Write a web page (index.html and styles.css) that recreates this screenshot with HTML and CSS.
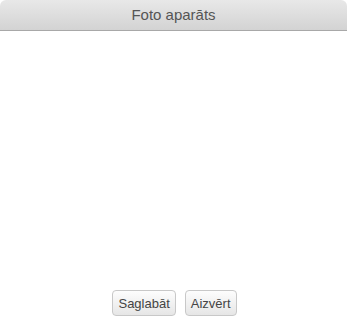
FILE: index.html
```html
<!DOCTYPE html>
<html lang="lv">
<head>
    <meta charset="UTF-8">
    <title>Foto aparāts</title>
    <link rel="stylesheet" href="styles.css">
</head>
<body>
    <div class="dialog">
        <div class="dialog-title">Foto aparāts</div>
        <div class="dialog-body"></div>
        <div class="dialog-buttons">
            <button class="btn">Saglabāt</button>
            <button class="btn">Aizvērt</button>
        </div>
    </div>
</body>
</html>
```

FILE: styles.css
```css
*{
    margin: 0;
    padding: 0;
    box-sizing: border-box;
}
body{
    background-color: #fff;
    font-family: "Liberation Sans", Arial, sans-serif;
}
.dialog{
    width: 347px;
    height: 329px;
    display: flex;
    flex-direction: column;
}
.dialog-title{
    height: 31px;
    line-height: 30px;
    text-align: center;
    font-size: 15px;
    color: #555;
    background: linear-gradient(#e8e8e8, #d3d3d3);
    border-bottom: 1px solid #a8a8a8;
    border-radius: 6px 6px 0 0;
}
.dialog-body{
    flex: 1;
}
.dialog-buttons{
    display: flex;
    justify-content: center;
    gap: 9px;
    padding: 0 0 13px 2px;
}
.btn{
    height: 26px;
    padding: 0 5px;
    font-family: "Liberation Sans", Arial, sans-serif;
    font-size: 13px;
    color: #444;
    background: linear-gradient(#fdfdfd, #e6e6e6);
    border: 1px solid #c8c8c8;
    border-radius: 4px;
}
```
